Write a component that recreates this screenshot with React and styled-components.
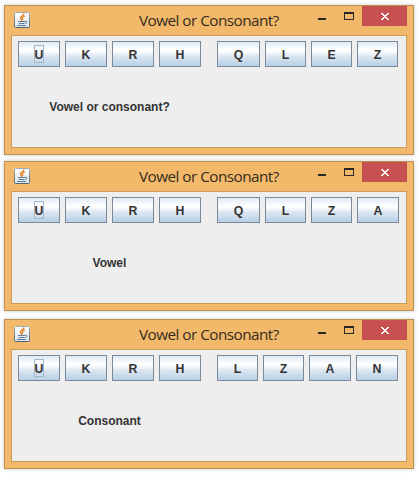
import React from 'react';
import styled, { createGlobalStyle } from 'styled-components';

const GlobalStyle = createGlobalStyle`
  * { box-sizing: border-box; }
  body { margin: 0; background: #fff; overflow: hidden; }
`;

const Desktop = styled.main`
  display: flex;
  flex-direction: column;
  width: 419px;
  height: 480px;
  padding: 5px 5px 0 4px;
`;

const Frame = styled.section`
  display: flex;
  flex-direction: column;
  flex: none;
  height: 150px;
  margin-bottom: ${(p) => p.$gap}px;
  padding: 0 6px 6px;
  border: 1px solid #bd8f51;
  background: #f3b96b;
  box-shadow: 0 0 4px rgba(0, 0, 0, 0.22);
`;

const TitleBar = styled.header`
  display: grid;
  grid-template-columns: 128px 142px 1fr;
  height: 29px;
`;

const AppIcon = styled.svg`
  display: block;
  width: 16px;
  height: 16px;
  margin: 6px 0 0 3px;
`;

const Title = styled.h1`
  margin: 0;
  padding-top: 1px;
  font: 400 15.3px/26px "Open Sans", "Noto Sans", sans-serif;
  letter-spacing: -0.54px;
  color: #352c20;
  white-space: nowrap;
`;

const Controls = styled.div`
  display: flex;
  justify-content: flex-end;
  height: 20px;
`;

const Control = styled.button`
  display: block;
  width: ${(p) => p.$width}px;
  height: 20px;
  padding: 0;
  border: 0;
  background: ${(p) => (p.$close ? '#c75050' : 'transparent')};
`;

const Glyph = styled.svg`
  display: block;
  width: 100%;
  height: 20px;
  shape-rendering: crispEdges;
`;

const Panel = styled.div`
  display: flex;
  flex-direction: column;
  height: 113px;
  padding: 5px 0 0 6px;
  border: 1px solid #c99b5c;
  background: #eee;
`;

const ButtonRow = styled.div`
  display: flex;
  gap: 16px;
`;

const ButtonGroup = styled.div`
  display: flex;
  gap: 5px;
`;

const LetterButton = styled.button`
  display: flex;
  align-items: center;
  justify-content: center;
  width: ${(p) => p.$width}px;
  height: 26px;
  padding: 0;
  border: 1px solid #7a8a99;
  background: linear-gradient(#dfe9f3 0%, #fff 32%, #fff 38%, #dbe6f1 60%, #b8cfe5 100%);
  font: 700 12.3px/18px "Liberation Sans", Arial, sans-serif;
  color: #333;
`;

const Letter = styled.span`
  display: flex;
  justify-content: center;
  width: 10px;
  height: 18px;
  border: 1px solid ${(p) => (p.$focused ? '#a3b8cc' : 'transparent')};
`;

const Message = styled.p`
  width: 183px;
  margin: 33px 0 0;
  font: 700 12px/15px "Liberation Sans", Arial, sans-serif;
  color: #333;
  text-align: center;
  white-space: nowrap;
`;

function JavaIcon() {
  return (
    <AppIcon viewBox="0 0 16 16">
      <defs>
        <linearGradient id="tile" x2="0" y2="1">
          <stop stopColor="#fff" />
          <stop offset="1" stopColor="#dce3e8" />
        </linearGradient>
        <linearGradient id="rim" x2="0" y2="1">
          <stop stopColor="#9eb0bd" />
          <stop offset="1" stopColor="#4d6474" />
        </linearGradient>
      </defs>
      <rect x=".5" y=".5" width="15" height="15" rx="1" fill="url(#tile)" stroke="url(#rim)" />
      <g fill="none" strokeLinecap="round">
        <path d="M9.8 2C10 4 5.8 4.6 6.6 6.3c.3.7.8 1 1 1.7" stroke="#e8832a" strokeWidth="1.5" />
        <path d="M10.5 4.3C8.8 5 8 5.5 8.6 6.5c.4.6.1 1.2-.5 1.7" stroke="#e8832a" strokeWidth="1.2" />
        <path d="M4.4 9.5h6.4M5.2 11.5h4.8M3.5 13.5h8" stroke="#587f9e" />
        <path d="M11.2 9.3c2.5-.8 2.5 1.6.2 2.2" stroke="#587f9e" />
      </g>
    </AppIcon>
  );
}

function Window({ left, right, message, gap = 0 }) {
  return (
    <Frame $gap={gap}>
      <TitleBar>
        <JavaIcon />
        <Title>Vowel or Consonant?</Title>
        <Controls>
          <Control $width={26} aria-label="Minimize">
            <Glyph viewBox="0 0 26 20"><path d="M8 12h8v2H8z" fill="#282828" /></Glyph>
          </Control>
          <Control $width={26} aria-label="Maximize">
            <Glyph viewBox="0 0 26 20">
              <path d="M8 6h10v8H8zM9 8v5h8V8z" fill="#282828" fillRule="evenodd" />
            </Glyph>
          </Control>
          <Control $width={45} $close aria-label="Close">
            <Glyph viewBox="0 0 45 20">
              <path
                d="M19 7h2v1h1v1h2V8h1V7h2v1h-1v1h-1v1h-1v1h1v1h1v1h1v1h-2v-1h-1v-1h-2v1h-1v1h-2v-1h1v-1h1v-1h1v-1h-1V9h-1V8h-1z"
                fill="#fff"
              />
            </Glyph>
          </Control>
        </Controls>
      </TitleBar>
      <Panel>
        <ButtonRow>
          {[left, right].map((group, g) => (
            <ButtonGroup key={g}>
              {group.map(([letter, width], i) => (
                <LetterButton key={letter} $width={width}>
                  <Letter $focused={g === 0 && i === 0}>{letter}</Letter>
                </LetterButton>
              ))}
            </ButtonGroup>
          ))}
        </ButtonRow>
        <Message>{message}</Message>
      </Panel>
    </Frame>
  );
}

const LEFT = [['U', 42], ['K', 42], ['R', 42], ['H', 42]];

export default function App() {
  return (
    <>
      <GlobalStyle />
      <Desktop>
        <Window left={LEFT} right={[['Q', 43], ['L', 41], ['E', 41], ['Z', 41]]} message="Vowel or consonant?" gap={6} />
        <Window left={LEFT} right={[['Q', 43], ['L', 41], ['Z', 41], ['A', 42]]} message="Vowel" gap={8} />
        <Window left={LEFT} right={[['L', 41], ['Z', 41], ['A', 42], ['N', 42]]} message="Consonant" />
      </Desktop>
    </>
  );
}
